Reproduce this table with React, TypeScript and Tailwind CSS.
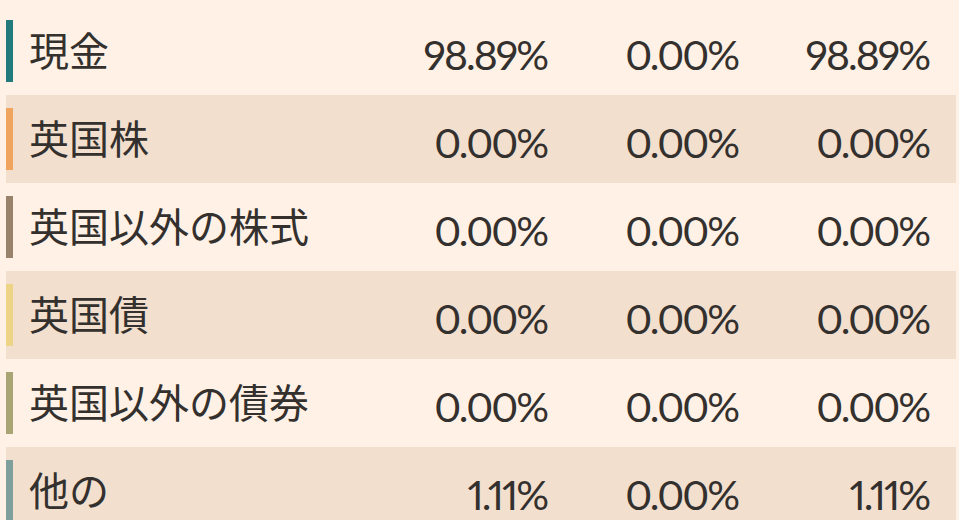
import React from "react";

const rows = [
  { label: "現金", color: "bg-[#227a7c]", shaded: false, v: ["98.89%", "0.00%", "98.89%"] },
  { label: "英国株", color: "bg-[#f0a45e]", shaded: true, v: ["0.00%", "0.00%", "0.00%"] },
  { label: "英国以外の株式", color: "bg-[#98836a]", shaded: false, v: ["0.00%", "0.00%", "0.00%"] },
  { label: "英国債", color: "bg-[#eed487]", shaded: true, v: ["0.00%", "0.00%", "0.00%"] },
  { label: "英国以外の債券", color: "bg-[#a8a473]", shaded: false, v: ["0.00%", "0.00%", "0.00%"] },
  { label: "他の", color: "bg-[#7e9f9b]", shaded: true, v: ["1.11%", "0.00%", "1.11%"] },
];

export default function App() {
  return (
    <div className="h-[520px] w-[959px] overflow-hidden bg-[#fff1e5] pt-[7px] pl-[6px] pr-[3px] text-[#33302e]">
      {rows.map((r, i) => (
        <div
          key={i}
          className={`flex h-[88px] items-start ${r.shaded ? "bg-[#f2dfce]" : ""} pr-[27px]`}
        >
          <div className={`mt-[13px] h-[62px] w-[7px] ${r.color}`} />
          <div
            className="ml-[16px] flex-1 pt-[22px] text-[40px] leading-none"
            style={{ fontFamily: '"Noto Sans CJK JP", sans-serif' }}
          >
            {r.label}
          </div>
          {r.v.map((v, j) => (
            <div
              key={j}
              className="w-[191px] pt-[27px] text-right text-[41px] leading-none tracking-[-2px] proportional-nums"
              style={{ fontFamily: 'Lato, "Noto Sans", sans-serif' }}
            >
              {v}
            </div>
          ))}
        </div>
      ))}
    </div>
  );
}
